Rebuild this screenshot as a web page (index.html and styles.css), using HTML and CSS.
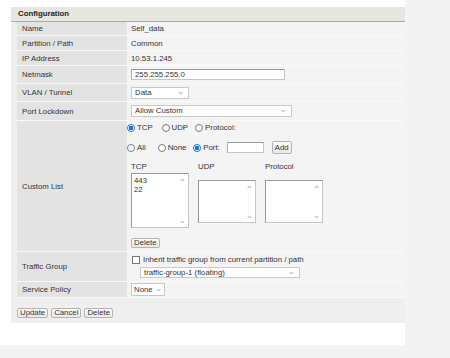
FILE: index.html
```html
<!DOCTYPE html>
<html lang="en">
<head>
  <meta charset="UTF-8">
  <title>Self IP - Configuration</title>
  <link rel="stylesheet" href="styles.css">
</head>
<body>

<div class="page">
  <div class="panel">
    <div class="panel-title">Configuration</div>

    <div class="props">
      <div class="row h14">
        <div class="label">Name</div>
        <div class="value">Self_data</div>
      </div>
      <div class="row h15">
        <div class="label">Partition / Path</div>
        <div class="value">Common</div>
      </div>
      <div class="row h15">
        <div class="label">IP Address</div>
        <div class="value">10.53.1.245</div>
      </div>
      <div class="row h18">
        <div class="label">Netmask</div>
        <div class="value"><div class="textbox netmask">255.255.255.0</div></div>
      </div>
      <div class="row h18">
        <div class="label">VLAN / Tunnel</div>
        <div class="value">
          <div class="select vlan">Data
            <svg class="chev" viewBox="0 0 6 4"><polyline points="1,1 3,3 5,1"/></svg>
          </div>
        </div>
      </div>
      <div class="row h19">
        <div class="label">Port Lockdown</div>
        <div class="value">
          <div class="select lockdown">Allow Custom
            <svg class="chev" viewBox="0 0 6 4"><polyline points="1,1 3,3 5,1"/></svg>
          </div>
        </div>
      </div>
      <div class="row h131">
        <div class="label">Custom List</div>
        <div class="value custom">
          <div class="opts line1">
            <label class="opt wide"><input type="radio" name="proto" checked>TCP</label>
            <label class="opt"><input type="radio" name="proto">UDP</label>
            <label class="opt"><input type="radio" name="proto">Protocol:</label>
          </div>
          <div class="opts line2">
            <label class="opt wider"><input type="radio" name="port">All</label>
            <label class="opt"><input type="radio" name="port">None</label>
            <label class="opt"><input type="radio" name="port" checked>Port:</label>
            <div class="textbox portbox"></div>
            <button class="btn add">Add</button>
          </div>
          <div class="lists">
            <div class="list-col">
              <div class="list-title">TCP</div>
              <div class="listbox tall">
                <div class="items"><div>443</div><div>22</div></div>
                <div class="scroll">
                  <svg viewBox="0 0 6 4"><polyline points="1,3 3,1 5,3"/></svg>
                  <svg viewBox="0 0 6 4"><polyline points="1,1 3,3 5,1"/></svg>
                </div>
              </div>
            </div>
            <div class="list-col">
              <div class="list-title">UDP</div>
              <div class="listbox">
                <div class="items"></div>
                <div class="scroll">
                  <svg viewBox="0 0 6 4"><polyline points="1,3 3,1 5,3"/></svg>
                  <svg viewBox="0 0 6 4"><polyline points="1,1 3,3 5,1"/></svg>
                </div>
              </div>
            </div>
            <div class="list-col">
              <div class="list-title">Protocol</div>
              <div class="listbox">
                <div class="items"></div>
                <div class="scroll">
                  <svg viewBox="0 0 6 4"><polyline points="1,3 3,1 5,3"/></svg>
                  <svg viewBox="0 0 6 4"><polyline points="1,1 3,3 5,1"/></svg>
                </div>
              </div>
            </div>
          </div>
          <button class="btn del">Delete</button>
        </div>
      </div>
      <div class="row h30">
        <div class="label">Traffic Group</div>
        <div class="value traffic">
          <label class="check"><span class="box"></span>Inherit traffic group from current partition / path</label>
          <div class="select tgroup">traffic-group-1 (floating)
            <svg class="chev" viewBox="0 0 6 4"><polyline points="1,1 3,3 5,1"/></svg>
          </div>
        </div>
      </div>
      <div class="row h16">
        <div class="label">Service Policy</div>
        <div class="value">
          <div class="select policy">None
            <svg class="chev" viewBox="0 0 6 4"><polyline points="1,1 3,3 5,1"/></svg>
          </div>
        </div>
      </div>
    </div>

    <div class="actions">
      <button class="btn">Update</button>
      <button class="btn">Cancel</button>
      <button class="btn">Delete</button>
    </div>
  </div>
</div>

</body>
</html>
```

FILE: styles.css
```css
body {
  margin: 0;
  background-color: #f3f3f3;
  font-family: "Liberation Sans", Arial, sans-serif;
  font-size: 7.8px;
  color: #333;
}
.page {
  width: 405px;
  height: 345px;
  box-sizing: border-box;
  padding: 7px 0 0 11px;
  background-color: #ffffff;
}
.panel {
  background-color: #efefef;
  height: 316px;
}
.panel-title {
  height: 14px;
  line-height: 14px;
  padding-left: 7px;
  font-weight: bold;
  color: #222;
  background-color: #e7e7e2;
  border-bottom: 1px solid #a9a9a6;
}
.props {
  margin-left: 6px;
}
.row {
  display: flex;
  box-sizing: border-box;
  border-bottom: 1px solid #fafafa;
}
.h14 { height: 14px; }
.h15 { height: 15px; }
.h16 { height: 16px; }
.h18 { height: 18px; }
.h19 { height: 19px; }
.h30 { height: 30px; }
.h131 { height: 131px; }
.label {
  width: 105px;
  flex: none;
  padding-left: 5px;
  display: flex;
  align-items: center;
  background-color: #e3e3e3;
  border-right: 1px solid #f6f6f6;
}
.value {
  flex: 1;
  display: flex;
  align-items: center;
  padding-left: 3px;
  background-color: #f4f4f4;
}
.textbox {
  box-sizing: border-box;
  background: #fff;
  border: 1px solid #c6c6c6;
  border-top-color: #9a9a9a;
  border-left-color: #b0b0b0;
}
.netmask {
  width: 154px;
  height: 11px;
  line-height: 9px;
  padding-left: 3px;
}
.select {
  position: relative;
  box-sizing: border-box;
  background: #fff;
  border: 1px solid #c9c9c9;
  padding-left: 3px;
}
.chev {
  position: absolute;
  right: 5px;
  top: 50%;
  width: 5px;
  height: 4px;
  margin-top: -2px;
  fill: none;
  stroke: #777;
  stroke-width: 0.9;
}
.vlan {
  width: 58px;
  height: 12px;
  line-height: 10px;
}
.lockdown {
  width: 161px;
  height: 12px;
  line-height: 10px;
}
.tgroup {
  width: 160px;
  height: 11px;
  line-height: 9px;
  margin: 3px 0 0 9px;
}
.policy {
  width: 34px;
  height: 13px;
  line-height: 11px;
  margin-left: 0;
  padding-left: 2px;
}
.policy .chev { right: 3px; }

/* custom list */
.custom {
  flex-direction: column;
  align-items: flex-start;
  padding-top: 1px;
}
.opts {
  display: flex;
  align-items: center;
  margin-left: -4px;
}
.line1 { height: 11px; }
.line2 { height: 13px; margin-top: 8px; }
.opt {
  display: flex;
  align-items: center;
  gap: 2px;
  margin-right: 7px;
}
.opt.wide { margin-right: 9px; }
.opt.wider { margin-right: 12px; }
.opt input {
  appearance: none;
  -webkit-appearance: none;
  box-sizing: border-box;
  width: 8px;
  height: 8px;
  margin: 0;
  border: 1px solid #7a7a7a;
  border-radius: 50%;
  background: #fff;
}
.opt input:checked {
  border-color: #1a6fd6;
  background: radial-gradient(circle, #1a6fd6 0 2px, #fff 2.4px);
}
.portbox {
  width: 37px;
  height: 11px;
  margin-left: 0;
}
.btn {
  font-family: inherit;
  font-size: 7.8px;
  color: #333;
  height: 10px;
  padding: 0 2px;
  line-height: 8px;
  border: 1px solid #b3b3b3;
  border-radius: 2px;
  background: linear-gradient(#fafafa, #e9e9e9);
}
.add {
  height: 13px;
  margin-left: 8px;
}
.lists {
  display: flex;
  margin-top: 8px;
}
.list-col {
  width: 67px;
  display: flex;
  flex-direction: column;
}
.list-title {
  height: 10px;
  line-height: 10px;
}
.listbox {
  display: flex;
  box-sizing: border-box;
  width: 58px;
  height: 43px;
  margin-top: 8px;
  background: #fff;
  border: 1px solid #c6c6c6;
  border-top-color: #9a9a9a;
  border-left-color: #9a9a9a;
}
.listbox.tall {
  height: 55px;
  margin-top: 1px;
}
.items {
  flex: 1;
  padding: 2px 0 0 2px;
  line-height: 9px;
}
.scroll {
  width: 12px;
  display: flex;
  flex-direction: column;
  justify-content: space-between;
  align-items: center;
  padding: 4px 0 3px;
}
.scroll svg {
  width: 5px;
  height: 4px;
  fill: none;
  stroke: #777;
  stroke-width: 0.9;
}
.del {
  margin-top: 10px;
}

/* traffic group */
.traffic {
  flex-direction: column;
  align-items: flex-start;
  justify-content: center;
}
.check {
  display: flex;
  align-items: center;
}
.check .box {
  box-sizing: border-box;
  width: 8px;
  height: 8px;
  margin: 0 3px 0 1px;
  border: 1px solid #777;
  background: #fff;
}

.actions {
  display: flex;
  gap: 3px;
  margin: 10px 0 0 6px;
}
```
